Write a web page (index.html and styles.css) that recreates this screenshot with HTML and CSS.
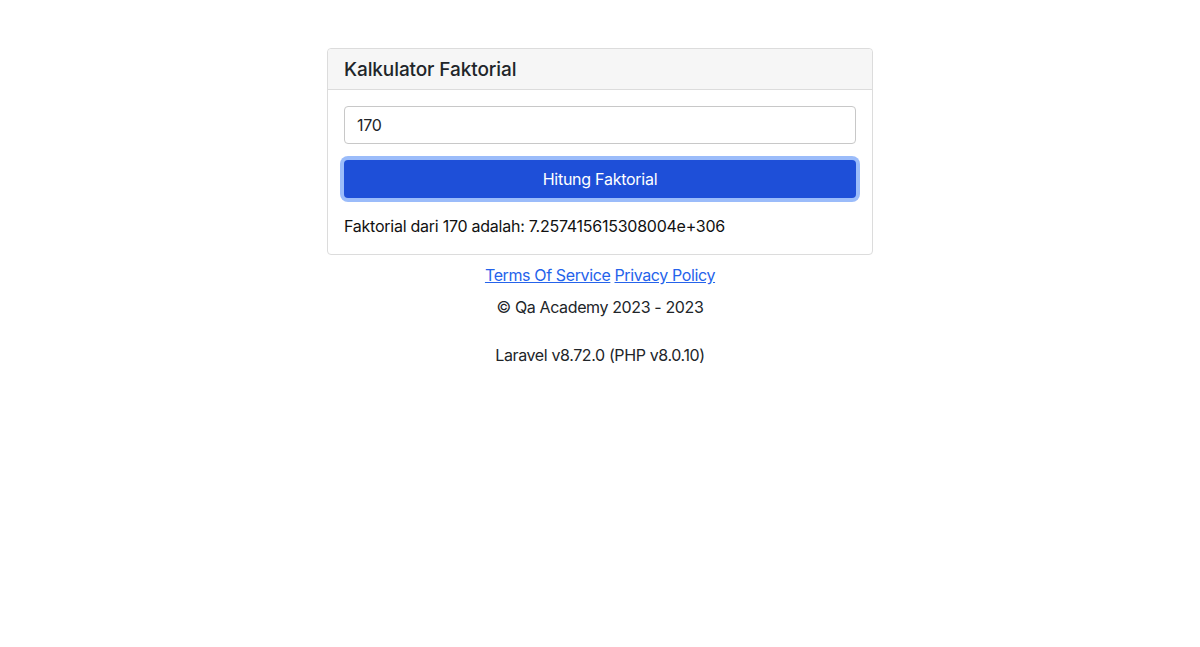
FILE: index.html
```html
<!DOCTYPE html>
<html lang="id">
<head>
<meta charset="utf-8">
<title>Kalkulator Faktorial</title>
<link rel="stylesheet" href="styles.css">
</head>
<body>
<main class="page">
  <section class="card">
    <header class="card-header">Kalkulator Faktorial</header>
    <div class="card-body">
      <input class="field" type="text" value="170">
      <button class="btn" type="button">Hitung Faktorial</button>
      <p class="result">Faktorial dari 170 adalah: 7.257415615308004e+306</p>
    </div>
  </section>
  <footer class="footer">
    <p class="links"><a href="#">Terms Of Service</a> <a href="#">Privacy Policy</a></p>
    <p class="copy">© Qa Academy 2023 - 2023</p>
    <p class="version">Laravel v8.72.0 (PHP v8.0.10)</p>
  </footer>
</main>
</body>
</html>
```

FILE: styles.css
```css
* { box-sizing: border-box; }
html, body { margin: 0; padding: 0; background: #fff; }
body {
  font-family: Inter, "Noto Sans", sans-serif;
  font-size: 16px;
  line-height: 24px;
  color: #212529;
  letter-spacing: -0.25px;
}
.page {
  display: flex;
  flex-direction: column;
  align-items: center;
  padding-top: 48px;
}
.card {
  width: 546px;
  border: 1px solid #dcdcdc;
  border-radius: 4px;
  background: #fff;
}
.card-header {
  background: #f6f6f6;
  border-bottom: 1px solid #dcdcdc;
  border-radius: 4px 4px 0 0;
  padding: 9px 16px 7px;
  font-size: 19px;
  line-height: 24px;
  font-weight: 500;
  color: #212529;
  letter-spacing: -0.1px;
}
.card-body {
  padding: 16px;
  display: flex;
  flex-direction: column;
  gap: 16px;
}
.field {
  height: 38px;
  width: 100%;
  border: 1px solid #c8c8c8;
  border-radius: 4px;
  padding: 0 12px;
  font-family: inherit;
  font-size: 16px;
  letter-spacing: -0.25px;
  color: #212529;
  background: #fff;
}
.btn {
  height: 38px;
  width: 100%;
  border: none;
  border-radius: 4px;
  background: #1e4fd8;
  color: #fff;
  font-family: inherit;
  font-size: 16px;
  letter-spacing: -0.25px;
  box-shadow: 0 0 0 4px #9bbcfa;
  cursor: pointer;
}
.result {
  margin: 0;
  color: #111;
}
.footer {
  margin-top: 8px;
  text-align: center;
  letter-spacing: -0.38px;
}
.footer p { margin: 0; }
.links a { color: #2563eb; text-decoration: underline; }
.copy { margin-top: 8px !important; }
.version { margin-top: 24px !important; }
```
